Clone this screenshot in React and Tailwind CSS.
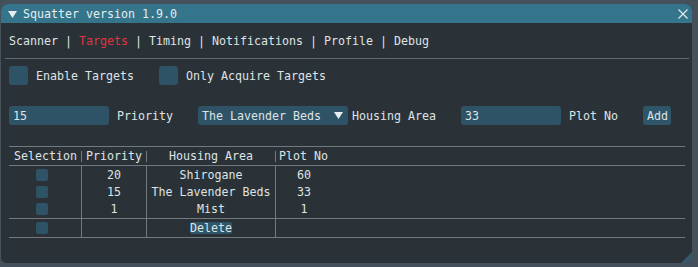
import React from 'react'

const mono = "font-['DejaVu_Sans_Mono',monospace] text-[11.63px] leading-[14px]"

function Check({ size = 'lg' }) {
  return size === 'lg' ? (
    <div className="w-[19px] h-[19px] rounded-[3px] bg-[#2e5366] shrink-0" />
  ) : (
    <div className="w-[12px] h-[12px] rounded-[2px] bg-[#2e5366] shrink-0" />
  )
}

function Arrow({ className }) {
  return (
    <svg width="9" height="7" viewBox="0 0 9 7" className={className}>
      <polygon points="0,0 9,0 4.5,7" fill="#e6eef0" />
    </svg>
  )
}

function VLine({ full }) {
  return full ? (
    <div className="w-px self-stretch bg-[#737a7f] shrink-0" />
  ) : (
    <div className="w-px h-[11px] bg-[#737a7f] shrink-0" />
  )
}

const rows = [
  { pr: '20', area: 'Shirogane', plot: '60', h: 'h-[17px]' },
  { pr: '15', area: 'The Lavender Beds', plot: '33', h: 'h-[17px]' },
  { pr: '1', area: 'Mist', plot: '1', h: 'h-[18px]' },
]

export default function App() {
  return (
    <div className={`w-[698px] h-[267px] bg-[#45515a] pt-[4px] pl-[1px] text-[#dfe3e5] ${mono}`}>
      <div className="relative w-[691px] h-[259px] bg-[#2a3237] rounded-t-[7px] rounded-b-[5px] overflow-hidden">
        {/* Title bar */}
        <div className="h-[19px] bg-[#34758b] flex items-center pl-[7px] pr-[4px]">
          <Arrow className="mt-[1px]" />
          <span className="ml-[6px] text-[#e4ecee] whitespace-pre">Squatter version 1.9.0</span>
          <svg width="10" height="10" viewBox="0 0 10 10" className="ml-auto mt-[1px]">
            <path d="M0.5 0.5 L9.5 9.5 M9.5 0.5 L0.5 9.5" stroke="#e6eef0" strokeWidth="1.1" />
          </svg>
        </div>

        {/* Menu */}
        <div className="pt-[11px] pl-[8px] h-[25px] whitespace-pre">
          Scanner | <span className="text-[#e0343f]">Targets</span> | Timing | Notifications | Profile | Debug
        </div>
        <div className="mt-[10px] ml-[4px] mr-[3px] h-px bg-[#62696e]" />

        {/* Checkboxes */}
        <div className="mt-[7px] pl-[8px] h-[19px] flex items-center">
          <Check />
          <span className="ml-[8px] whitespace-pre">Enable Targets</span>
          <div className="ml-[25px]">
            <Check />
          </div>
          <span className="ml-[8px] whitespace-pre">Only Acquire Targets</span>
        </div>

        {/* Add row */}
        <div className="mt-[21px] pl-[8px] h-[19px] flex items-center">
          <div className="w-[100px] h-[19px] rounded-[3px] bg-[#2e5366] flex items-center pl-[4px]">15</div>
          <span className="ml-[8px] whitespace-pre">Priority</span>
          <div className="ml-[25px] w-[150px] h-[19px] rounded-[3px] bg-[#2e5366] flex items-center pl-[4px] pr-[5px]">
            <span className="whitespace-pre">The Lavender Beds</span>
            <Arrow className="ml-auto" />
          </div>
          <span className="ml-[4px] whitespace-pre">Housing Area</span>
          <div className="ml-[25px] w-[100px] h-[19px] rounded-[3px] bg-[#2e5366] flex items-center pl-[4px]">33</div>
          <span className="ml-[8px] whitespace-pre">Plot No</span>
          <div className="ml-[25px] w-[28px] h-[19px] rounded-[3px] bg-[#2e5668] flex items-center pl-[4px]">Add</div>
        </div>

        {/* Table */}
        <div className="mt-[21px] ml-[8px] mr-[7px] border-t border-b border-[#737a7f]">
          <div className="h-[19px] flex items-center border-b border-[#737a7f]">
            <div className="w-[72px] pl-[5px] whitespace-pre">Selection</div>
            <VLine />
            <div className="w-[64px] pl-[4px] whitespace-pre">Priority</div>
            <VLine />
            <div className="w-[128px] text-center whitespace-pre">Housing Area</div>
            <VLine />
            <div className="flex-1 pl-[3px] whitespace-pre">Plot No</div>
          </div>
          {rows.map((r, i) => (
            <div key={i} className={`${r.h} flex`}>
              <div className="w-[72px] flex items-center pl-[27px]">
                <Check size="sm" />
              </div>
              <VLine full />
              <div className="w-[64px] flex items-center justify-center">{r.pr}</div>
              <VLine full />
              <div className="w-[128px] flex items-center justify-center whitespace-pre">{r.area}</div>
              <VLine full />
              <div className="w-[56px] flex items-center justify-center">{r.plot}</div>
            </div>
          ))}
          <div className="h-[19px] flex border-t border-[#737a7f]">
            <div className="w-[72px] flex items-center pl-[27px]">
              <Check size="sm" />
            </div>
            <VLine full />
            <div className="w-[64px]" />
            <VLine full />
            <div className="w-[128px] flex items-center justify-center">
              <div className="h-[12px] flex items-center bg-[#2e5668] rounded-[2px] leading-[12px]">Delete</div>
            </div>
            <VLine full />
          </div>
        </div>

        {/* Resize grip */}
        <svg width="11" height="11" viewBox="0 0 11 11" className="absolute right-0 bottom-0">
          <polygon points="11,0 11,11 0,11" fill="#34586a" />
        </svg>
      </div>
    </div>
  )
}
